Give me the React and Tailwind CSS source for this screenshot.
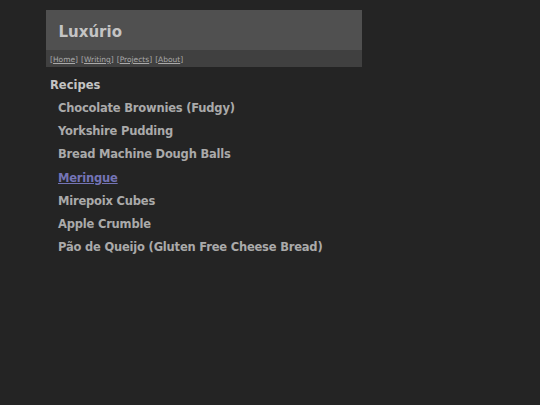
import React from 'react';

const recipes = [
  'Chocolate Brownies (Fudgy)',
  'Yorkshire Pudding',
  'Bread Machine Dough Balls',
  'Meringue',
  'Mirepoix Cubes',
  'Apple Crumble',
  'Pão de Queijo (Gluten Free Cheese Bread)',
];

const navLinks = ['Home', 'Writing', 'Projects', 'About'];

export default function App() {
  return (
    <div className="min-h-screen bg-[#242424] pt-[10px] font-['DejaVu_Sans',sans-serif]">
      <div className="ml-[46px] w-[316px]">
        {/* header */}
        <div className="bg-[#505050] h-[40px] flex items-center pl-[12.5px] pt-[5px]">
          <h1 className="text-[15px] font-bold text-[#c4c4c4]">Luxúrio</h1>
        </div>
        <div className="bg-[#404040] h-[17px] flex items-center pl-[4px] pt-[2px] text-[7.5px] text-[#aaaaaa]">
          {navLinks.map((l, i) => (
            <span key={l} className={i > 0 ? 'ml-[3px]' : ''}>
              [<a href="#" className="underline">{l}</a>]
            </span>
          ))}
        </div>

        {/* content */}
        <div className="pl-[4px] pt-[11px]">
          <h2 className="text-[11.5px] font-bold text-[#c4c4c4] leading-[14px]">Recipes</h2>
          <ul className="mt-[9px] pl-[8px]">
            {recipes.map((r) => (
              <li key={r} className="h-[23.2px] leading-[14px] text-[11.5px] font-bold tracking-[-0.2px]">
                {r === 'Meringue' ? (
                  <a href="#" className="underline text-[#7474b6]">{r}</a>
                ) : (
                  <span className="text-[#aaaaaa]">{r}</span>
                )}
              </li>
            ))}
          </ul>
        </div>
      </div>
    </div>
  );
}
